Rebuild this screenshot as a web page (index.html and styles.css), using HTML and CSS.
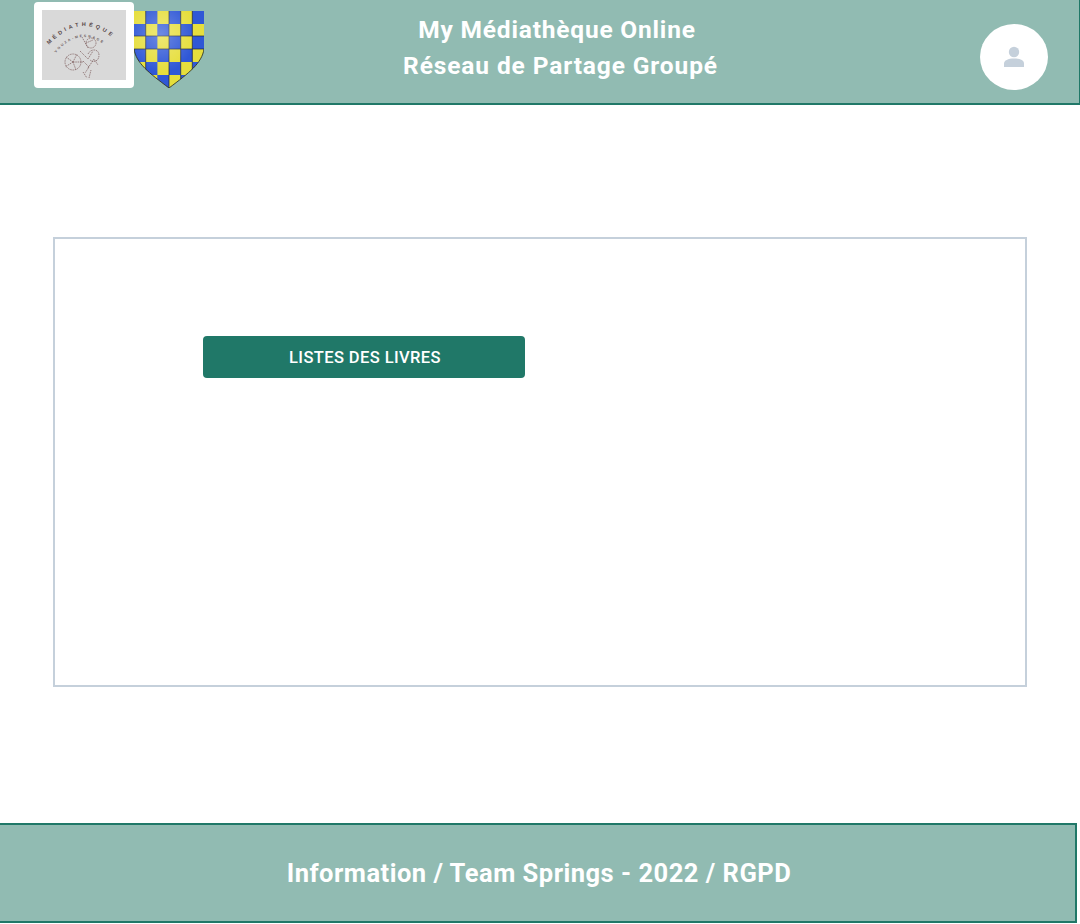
FILE: index.html
```html
<!DOCTYPE html>
<html lang="fr">
<head>
<meta charset="utf-8">
<title>My Médiathèque Online</title>
<link rel="stylesheet" href="styles.css">
</head>
<body>
<header class="header">
  <div class="logos">
    <div class="logo-frame">
      <svg class="logo" viewBox="0 0 84 70" width="84" height="70">
        <rect width="84" height="70" fill="#d9d9d9"/>
        <path id="arc1" d="M7 35 Q41 -2 76 33" fill="none"/>
        <path id="arc2" d="M14 43 Q38 14 67 38" fill="none"/>
        <text class="logo-t1"><textPath href="#arc1">MÉDIATHÈQUE</textPath></text>
        <text class="logo-t2"><textPath href="#arc2">VOUZA-MESNAGE</textPath></text>
        <g class="flower" fill="none">
          <circle cx="31" cy="52" r="8"/>
          <path d="M31 52l-7-5M31 52l4-8M31 52l-8 5M31 52l3 8M31 52h10M41 51l6 6-4 6M38 41l8 8 5-8M40 27l6 11M44 33l7-3M46 58l6-9 4 6M41 62l4 6M47 68l2-8M46 44c3-6 11-5 11 1s-5 8-9 5"/>
          <circle cx="49" cy="33" r="5"/>
        </g>
      </svg>
    </div>
    <svg class="shield" viewBox="0 0 70 77" width="70" height="77">
      <defs>
        <clipPath id="shield-clip"><path d="M0 0H70V38C68 52 55 62 35 77C15 62 2 52 0 38Z"/></clipPath>
        <radialGradient id="shine" cx=".38" cy=".3" r=".5">
          <stop offset="0" stop-color="#fff" stop-opacity=".3"/>
          <stop offset="1" stop-color="#fff" stop-opacity="0"/>
        </radialGradient>
      </defs>
      <g clip-path="url(#shield-clip)">
        <rect width="70" height="77" fill="#e6de3c"/>
        <g fill="#2f57d6">
          <rect x="11.7" y="0" width="11.7" height="13"/><rect x="35" y="0" width="11.7" height="13"/><rect x="58.3" y="0" width="11.7" height="13"/>
          <rect x="0" y="13" width="11.7" height="12"/><rect x="23.3" y="13" width="11.7" height="12"/><rect x="46.7" y="13" width="11.7" height="12"/>
          <rect x="11.7" y="25" width="11.7" height="13"/><rect x="35" y="25" width="11.7" height="13"/><rect x="58.3" y="25" width="11.7" height="13"/>
          <rect x="0" y="38" width="11.7" height="13"/><rect x="23.3" y="38" width="11.7" height="13"/><rect x="46.7" y="38" width="11.7" height="13"/>
          <rect x="11.7" y="51" width="11.7" height="13"/><rect x="35" y="51" width="11.7" height="13"/><rect x="58.3" y="51" width="11.7" height="13"/>
          <rect x="0" y="64" width="11.7" height="13"/><rect x="23.3" y="64" width="11.7" height="13"/><rect x="46.7" y="64" width="11.7" height="13"/>
        </g>
        <g stroke="#1b2238" stroke-width=".7" fill="none">
          <path d="M11.7 0V77M35 0V77M46.7 0V77M58.3 0V77M0 25H70M0 38H70"/>
        </g>
        <rect width="70" height="77" fill="url(#shine)"/>
      </g>
      <path d="M70 38C68 52 55 62 35 77C15 62 2 52 0 38" fill="none" stroke="#23261c" stroke-width=".8"/>
    </svg>
  </div>
  <div class="titles">
    <div class="title-1">My Médiathèque Online</div>
    <div class="title-2">Réseau de Partage Groupé</div>
  </div>
  <div class="avatar">
    <svg viewBox="0 0 24 24" width="24" height="24" fill="#c5d0db">
      <circle cx="12" cy="7" r="5.2"/>
      <path d="M2 22V18.500C2 15.500 6 13.500 12 13.500S22 15.500 22 18.500V22Z"/>
    </svg>
  </div>
</header>
<main class="main">
  <section class="card">
    <button class="btn">LISTES DES LIVRES</button>
  </section>
</main>
<footer class="footer">Information / Team Springs - 2022 / RGPD</footer>
</body>
</html>
```
FILE: styles.css
```css
* { box-sizing: border-box; }
html, body { margin: 0; padding: 0; }
body { background: #fff; font-family: Roboto, "Liberation Sans", sans-serif; overflow: hidden; }

.header {
  height: 105px;
  background: #91bbb2;
  border-bottom: 2px solid #207868;
  border-right: 1px solid #207868;
  display: flex;
  align-items: flex-start;
  padding-left: 34px;
}
.logos { display: flex; align-items: flex-start; padding-top: 2px; width: 170px; }
.logo-frame { width: 100px; height: 86px; background: #fff; border-radius: 4px; padding: 8px; }
.logo { display: block; }
.logo-t1 { font: 700 5.500px "Liberation Sans", sans-serif; fill: #5a4a4a; letter-spacing: 3px; }
.logo-t2 { font: 700 3.500px "Liberation Sans", sans-serif; fill: #6a5c5c; letter-spacing: 1.800px; }
.flower { stroke: #7b5a5a; stroke-width: .7; stroke-dasharray: 1.500 .8; }
.shield { display: block; margin-top: 9px; }

.titles {
  width: 713px;
  padding-top: 12px;
  color: #fff;
  font-weight: 700;
  font-size: 24.500px;
  line-height: 36px;
  text-align: center;
}
.title-1 { padding-right: 7px; letter-spacing: .8px; }
.title-2 { letter-spacing: .88px; }

.avatar {
  width: 68px;
  height: 66px;
  margin: 24px 0 0 63px;
  border-radius: 50%;
  background: #fff;
  display: flex;
  align-items: center;
  justify-content: center;
}

.main { padding: 132px 53px 0; }
.card {
  height: 450px;
  border: 2px solid #c5d0db;
  padding: 97px 148px;
}
.btn {
  display: block;
  width: 322px;
  height: 42px;
  border: 0;
  border-radius: 4px;
  background: #207868;
  color: #fff;
  font-family: Roboto, "Liberation Sans", sans-serif;
  font-size: 16.500px;
  font-weight: 500;
  letter-spacing: .4px;
  padding: 0 0 0 2px;
}

.footer {
  margin-top: 136px;
  width: 1077px;
  height: 100px;
  background: #91bbb2;
  border: 2px solid #207868;
  border-left: 0;
  color: #fff;
  font-size: 25.500px;
  font-weight: 700;
  letter-spacing: .5px;
  display: flex;
  align-items: center;
  justify-content: center;
  padding-left: 3px;
}
```
